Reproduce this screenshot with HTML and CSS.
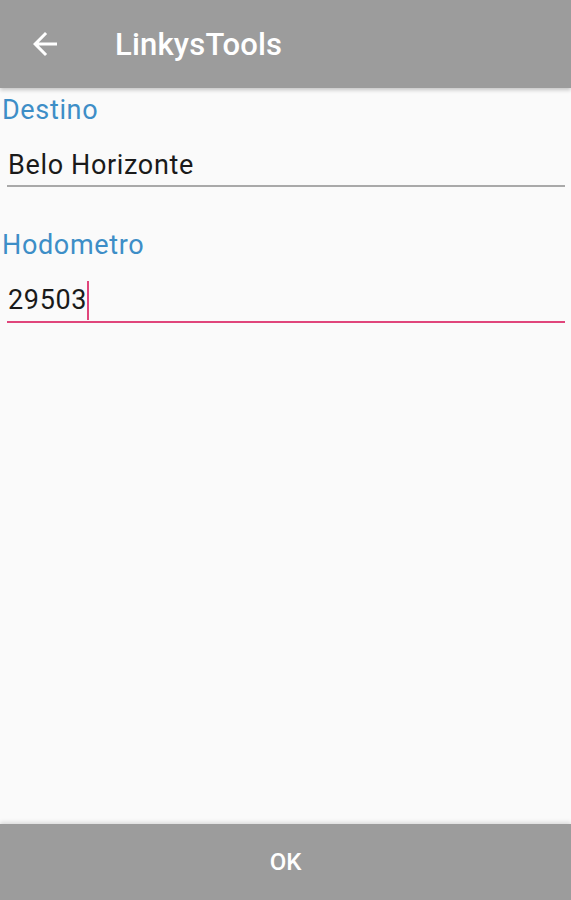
FILE: index.html
```html
<!DOCTYPE html>
<html lang="pt-BR">
<head>
  <meta charset="UTF-8" />
  <meta name="viewport" content="width=device-width, initial-scale=1" />
  <title>LinkysTools</title>
  <link rel="stylesheet" href="styles.css">
</head>
<body>

<div class="screen">
  <header class="toolbar">
    <button class="back" aria-label="Voltar">
      <svg width="36" height="36" viewBox="0 0 24 24">
        <path d="M20 11H7.83l5.59-5.59L12 4l-8 8 8 8 1.41-1.41L7.83 13H20v-2z" fill="#fff" />
      </svg>
    </button>
    <h1 class="title">LinkysTools</h1>
  </header>

  <main class="form">
    <div class="group">
      <div class="label">Destino</div>
      <div class="field">Belo Horizonte</div>
    </div>
    <div class="group">
      <div class="label">Hodometro</div>
      <div class="field focused">29503<span class="caret"></span></div>
    </div>
  </main>

  <footer class="actions">
    <button class="ok">OK</button>
  </footer>
</div>

</body>
</html>
```

FILE: styles.css
```css
html, body {
  margin: 0;
  padding: 0;
  background: #fafafa;
  font-family: Roboto, "Noto Sans", sans-serif;
}

.screen {
  display: flex;
  flex-direction: column;
  height: 100vh;
}

.toolbar {
  display: flex;
  align-items: center;
  height: 88px;
  flex-shrink: 0;
  background: #9c9c9c;
  box-shadow: 0 2px 4px rgba(0, 0, 0, 0.22);
  position: relative;
  z-index: 1;
}

.back {
  display: flex;
  align-items: center;
  justify-content: center;
  width: 36px;
  height: 36px;
  margin-left: 27px;
  padding: 0;
  border: none;
  background: none;
}

.title {
  margin: 0 0 0 52px;
  font-size: 31px;
  font-weight: 500;
  letter-spacing: 0.2px;
  color: #fff;
}

.form {
  flex: 1;
  padding: 8px 6px 0 0;
}

.group {
  margin-bottom: 44px;
}

.label {
  margin-left: 2px;
  font-size: 27px;
  line-height: 28px;
  letter-spacing: 0.65px;
  color: #3d8ec7;
}

.field {
  margin: 27px 0 0 7px;
  padding: 0 0 6px 1px;
  font-size: 27px;
  line-height: 28px;
  letter-spacing: 0.65px;
  color: #1a1a1a;
  border-bottom: 2px solid #a9a9a9;
}

.field.focused {
  border-bottom-color: #e0457b;
}

.caret {
  display: inline-block;
  width: 2px;
  height: 39px;
  margin: -8px 0 -5px 0;
  vertical-align: middle;
  background: #e0457b;
}

.actions {
  height: 76px;
  flex-shrink: 0;
  background: #9c9c9c;
  box-shadow: 0 -2px 4px rgba(0, 0, 0, 0.12);
}

.ok {
  width: 100%;
  height: 100%;
  border: none;
  background: none;
  color: #fff;
  font-family: Roboto, "Noto Sans", sans-serif;
  font-size: 24px;
  font-weight: 500;
}
```
